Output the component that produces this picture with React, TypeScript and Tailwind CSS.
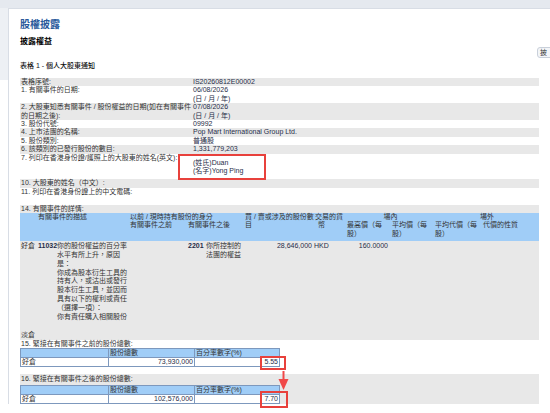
import React from 'react';

const FONT = "font-['Liberation_Sans','Noto_Sans_CJK_TC',sans-serif]";

interface IRow {
  label: string[];
  value: string[];
  gray?: boolean;
}

const infoRows: IRow[] = [
  { gray: true, label: ['表格序號:'], value: ['IS20260812E00002'] },
  { label: ['1. 有關事件的日期:'], value: ['06/08/2026', '(日 / 月 / 年)'] },
  {
    gray: true,
    label: ['2. 大股東知悉有關事件 / 股份權益的日期(如在有關事件', '的日期之後):'],
    value: ['07/08/2026', '(日 / 月 / 年)']
  },
  { label: ['3. 股份代號:'], value: ['09992'] },
  { gray: true, label: ['4. 上市法團的名稱:'], value: ['Pop Mart International Group Ltd.'] },
  { label: ['5. 股份類別:'], value: ['普通股'] },
  { gray: true, label: ['6. 該類別的已發行股份的數目:'], value: ['1,331,779,203'] }
];

const description = [
  '你的股份權益的百分率',
  '水平有所上升，原因',
  '是：',
  '你成為股本衍生工具的',
  '持有人，或沽出或發行',
  '股本衍生工具，並因而',
  '具有以下的權利或責任',
  '（選擇一項）：',
  '你有責任購入相關股份'
];

const Lines = ({ lines }: { lines: string[] }) => (
  <>
    {lines.map((l, i) => (
      <div key={i} className="whitespace-nowrap">{l}</div>
    ))}
  </>
);

const InfoRow = ({ row }: { row: IRow }) => (
  <div className={row.gray ? 'flex bg-[#e8e8e8]' : 'flex'}>
    <div className="w-[173px] shrink-0 pl-px">
      <Lines lines={row.label} />
    </div>
    <div className="text-[#1f2d48]">
      <Lines lines={row.value} />
    </div>
  </div>
);

// small "股份總數 / 百分率" table used by rows 15 and 16
const TotalTable = ({ shares, pct }: { shares: string; pct: string }) => (
  <div className="w-[260px] border border-[#7d98bd]">
    <div className="flex h-[8px] bg-[#a0cdf7] leading-[8px]">
      <div className="w-[87px]" />
      <div className="w-[86px] border-l border-[#7d98bd] pl-px">股份總數</div>
      <div className="flex-1 border-l border-[#7d98bd] pl-px">百分率數字(%)</div>
    </div>
    <div className="flex h-[9px] border-t border-[#7d98bd] bg-white leading-[8px]">
      <div className="w-[87px] pl-px">好倉</div>
      <div className="w-[86px] border-l border-[#7d98bd] pr-px text-right text-[#1f2d48]">{shares}</div>
      <div className="flex-1 border-l border-[#7d98bd] pr-px text-right text-[#1f2d48]">{pct}</div>
    </div>
  </div>
);

const GRID = 'grid grid-cols-[18px_19px_73px_58px_18px_39px_69px_32px_46px_43px_47px_57px]';

export default function App() {
  return (
    <div className={`relative h-[413px] w-[550px] overflow-hidden bg-white text-[7px] leading-[8.4px] text-[#333] ${FONT}`}>
      <div className="h-[8px] bg-[#e5e9ef]" />
      <div className="flex">
        <div className="w-[8px] shrink-0">
          <div className="h-[72px] bg-[#edf0f4]" />
        </div>
        <div className="w-[600px] shrink-0 border-l border-t border-[#d8dde5] pl-[11px] pt-[10px]">
          <div className="text-[10px] font-bold leading-[12px] text-[#2a5a9c]">股權披露</div>
          <div className="mt-[6px] grid grid-cols-[517px_auto]">
            <div className="text-[8px] font-bold leading-[10px] text-black">披露權益</div>
            <div className="mt-[10px] h-[11px] w-[24px] rounded-[3px] border border-[#c9d0da] bg-[#f3f5f8] pl-[2px] leading-[9px]">
              披
            </div>
          </div>
          <div className="mt-[4px] font-medium leading-[8px] text-[#111]">表格 1 - 個人大股東通知</div>

          <div className="mt-[8px] w-[519px]">
            {infoRows.map((row, i) => (
              <InfoRow key={i} row={row} />
            ))}
            <div className="flex pb-[4px]">
              <div className="w-[173px] shrink-0 whitespace-nowrap pl-px">
                7. 列印在香港身份證/護照上的大股東的姓名(英文):
              </div>
              <div className="pt-[5px] text-[#1f2d48]">
                <div>(姓氏)Duan</div>
                <div>(名字)Yong Ping</div>
              </div>
            </div>
            <div className="bg-[#e8e8e8] pl-px">10. 大股東的姓名（中文）:</div>
            <div className="pl-px">11. 列印在香港身份證上的中文電碼:</div>
            <div className="h-[8.4px]" />
            <div className="bg-[#e8e8e8] pl-px">14. 有關事件的詳情:</div>

            <div className={`${GRID} grid-rows-[repeat(3,8.4px)] bg-[#a0cdf7] pb-[3px]`}>
              <div className="col-span-2 col-start-2 row-start-1">有關事件的描述</div>
              <div className="col-span-3 col-start-4 row-start-1 whitespace-nowrap">以前 / 現時持有股份的身分</div>
              <div className="col-start-4 row-start-2">有關事件之前</div>
              <div className="col-span-2 col-start-5 row-start-2">有關事件之後</div>
              <div className="col-start-7 row-span-2 row-start-1">
                <div className="whitespace-nowrap">買 / 賣或涉及的股份數</div>
                <div>目</div>
              </div>
              <div className="col-start-8 row-span-2 row-start-1 pl-px">
                <div className="whitespace-nowrap">交易的貨</div>
                <div className="pl-[3px]">幣</div>
              </div>
              <div className="col-span-2 col-start-9 row-start-1 text-center">場內</div>
              <div className="col-span-2 col-start-11 row-start-1 text-center">場外</div>
              <div className="col-start-9 row-span-2 row-start-2 pl-px">
                <div className="whitespace-nowrap">最高價（每</div>
                <div>股）</div>
              </div>
              <div className="col-start-10 row-span-2 row-start-2">
                <div className="whitespace-nowrap">平均價（每</div>
                <div>股）</div>
              </div>
              <div className="col-start-11 row-span-2 row-start-2">
                <div className="whitespace-nowrap">平均代價（每</div>
                <div>股）</div>
              </div>
              <div className="col-start-12 row-start-2 pl-px">代價的性質</div>
            </div>

            <div className={`${GRID} bg-[#e8e8e8] pb-[10px] pt-px leading-[8.8px]`}>
              <div className="pl-px">好倉</div>
              <div className="font-bold text-[#1f2d48]">11032</div>
              <div>
                <Lines lines={description} />
              </div>
              <div />
              <div className="font-bold text-[#1f2d48]">2201</div>
              <div>
                <div>你所控制的</div>
                <div>法團的權益</div>
              </div>
              <div className="pr-[2px] text-right text-[#1f2d48]">28,646,000</div>
              <div className="text-[#1f2d48]">HKD</div>
              <div className="pr-[4px] text-right text-[#1f2d48]">160.0000</div>
            </div>
            <div className="bg-[#e8e8e8] pl-px">淡倉</div>

            <div className="pl-px">15. 緊接在有關事件之前的股份總數:</div>
            <TotalTable shares="73,930,000" pct="5.55" />

            <div className="mt-[7px] bg-[#e8e8e8] pt-px">
              <div className="pl-px">16. 緊接在有關事件之後的股份總數:</div>
              <div className="mt-px">
                <TotalTable shares="102,576,000" pct="7.70" />
              </div>
            </div>
          </div>
        </div>
      </div>

      {/* red annotations drawn over the page */}
      <div className="absolute left-[178px] top-[154px] h-[26px] w-[88px] border-2 border-[#e8413c]" />
      <div className="absolute left-[260px] top-[356px] h-[14px] w-[26px] border-2 border-[#e8413c]" />
      <div className="absolute left-[260px] top-[391px] h-[17px] w-[28px] border-2 border-[#e8413c]" />
      <svg className="absolute left-[277px] top-[371px]" width="13" height="20" viewBox="0 0 13 20">
        <rect x="5.5" y="0" width="2" height="9" fill="#f04848" />
        <polygon points="1.5,8 11.5,8 6.5,19" fill="#f04848" />
      </svg>
    </div>
  );
}
